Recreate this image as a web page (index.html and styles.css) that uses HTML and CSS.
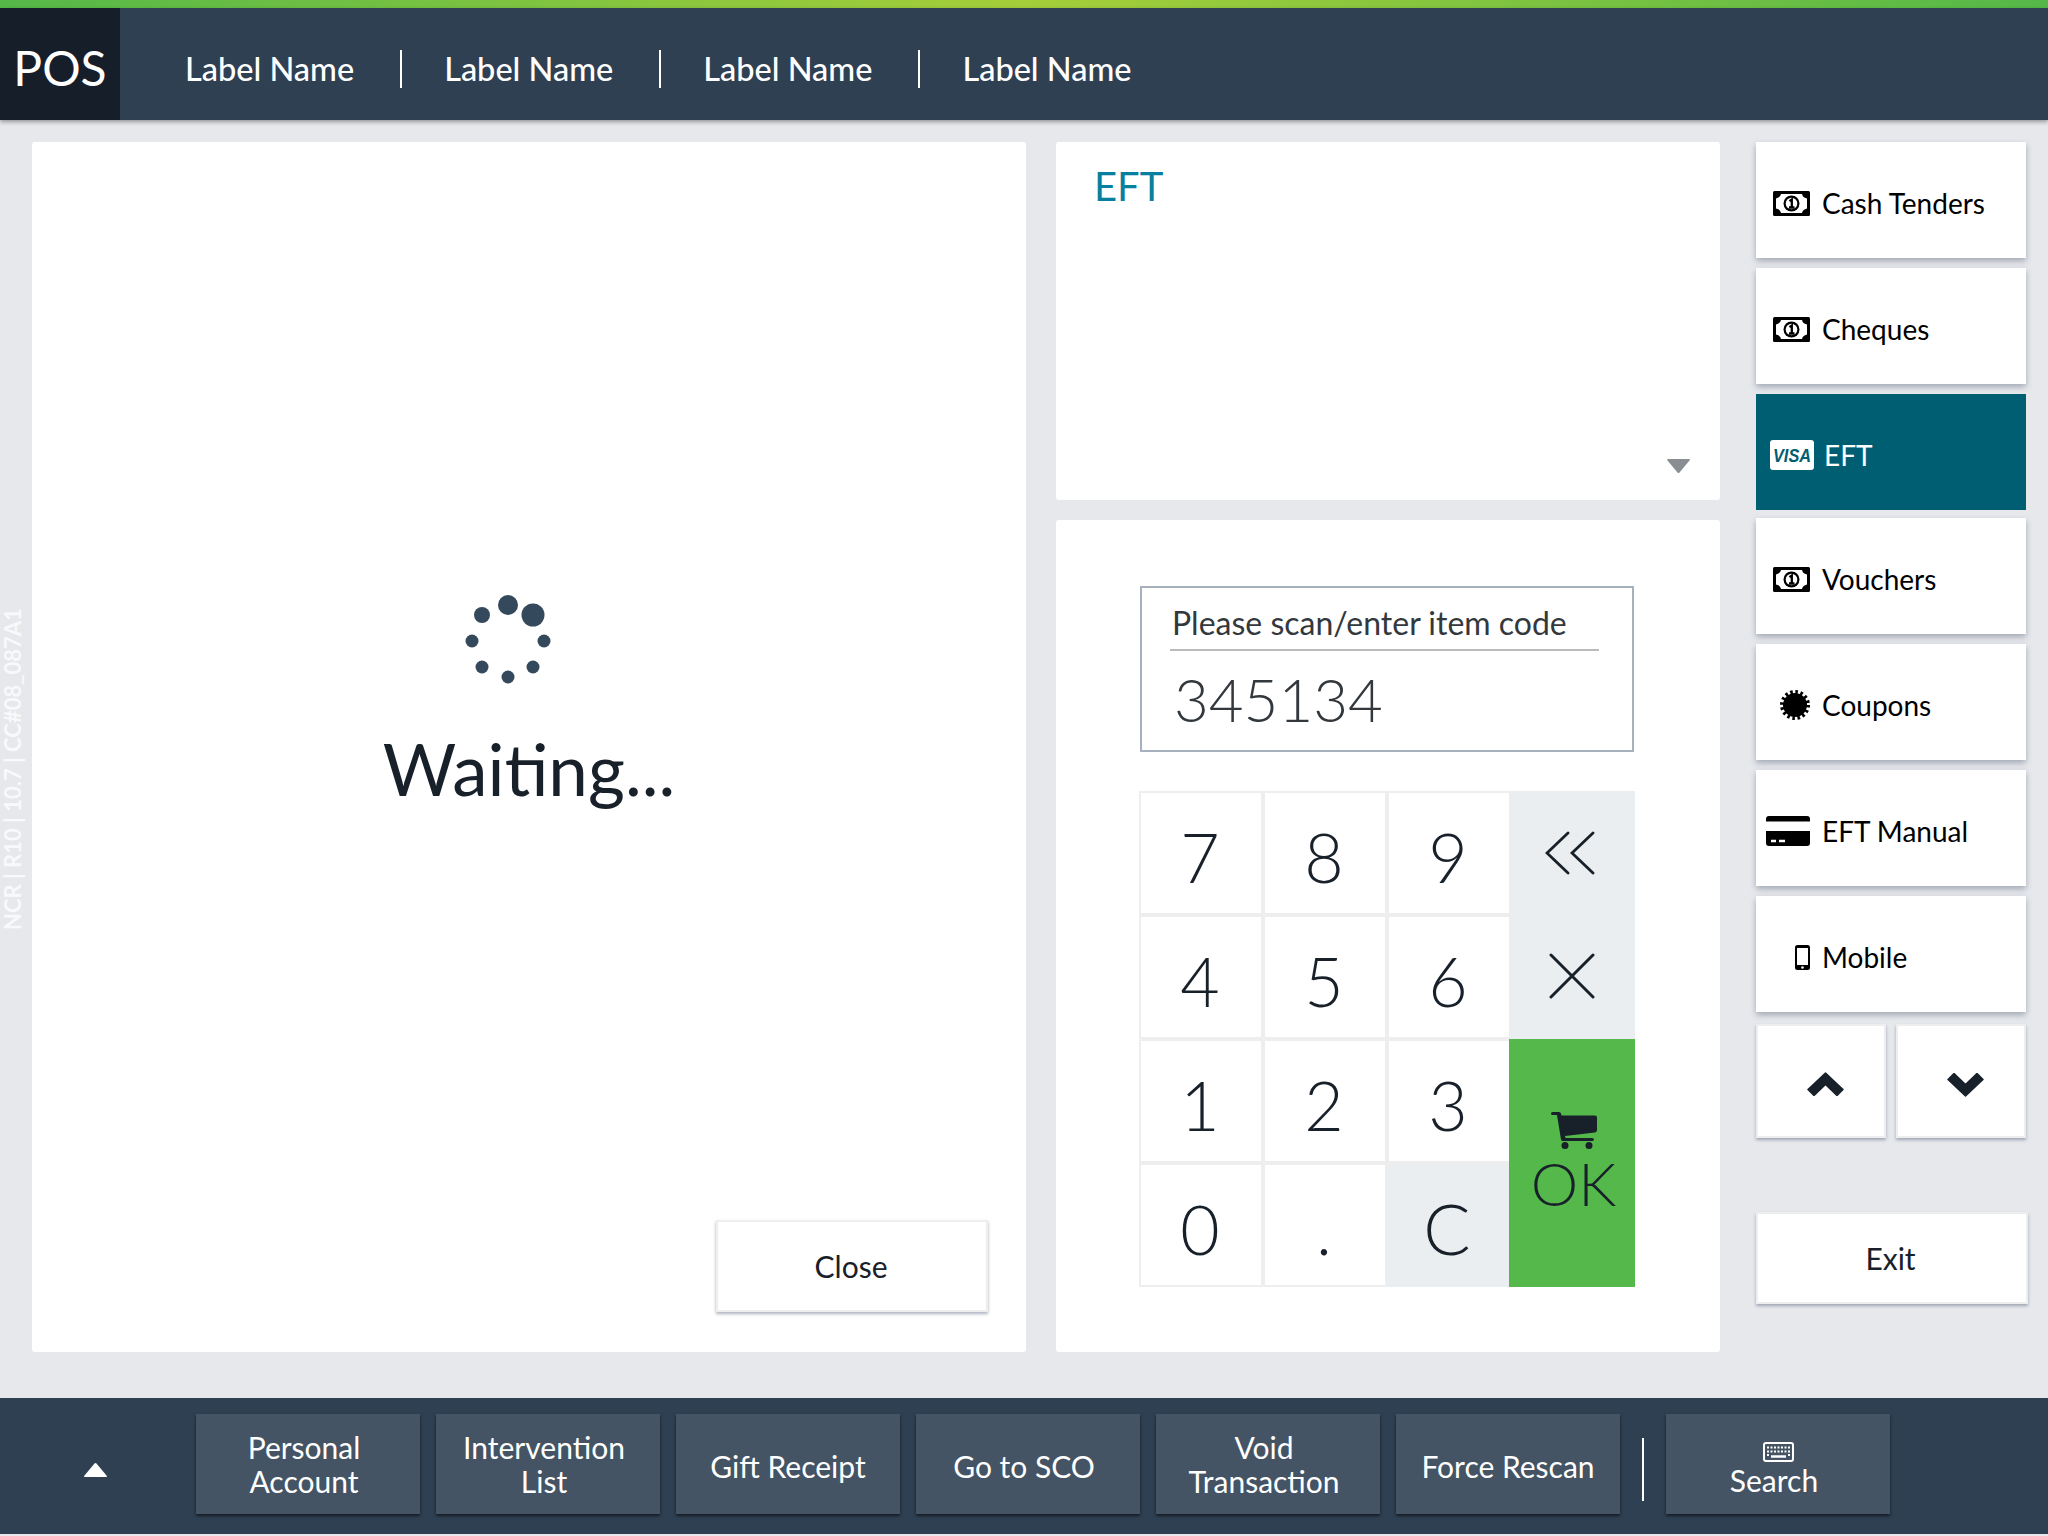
FILE: index.html
```html
<!DOCTYPE html>
<html lang="en">
<head>
  <meta charset="UTF-8">
  <meta name="viewport" content="width=device-width, initial-scale=1.0">
  <title>POS</title>
  <link rel="stylesheet" href="styles.css">
</head>
<body>
  <svg class="defs" width="0" height="0">
    <symbol id="money" viewBox="0 0 37 25">
      <rect width="37" height="25" rx="1.500" fill="#000"/>
      <path d="M8 3H29Q29.500 6.500 34 7.500V17.500Q29.500 18.500 29 22H8Q7.500 18.500 3 17.500V7.500Q7.500 6.500 8 3Z" fill="#fff"/>
      <circle cx="18.500" cy="12.500" r="8" fill="#000"/>
      <circle cx="18.500" cy="12.500" r="5.800" fill="#fff"/>
      <path d="M16.500 10.200L18.800 8.500V16.500M16 16.500H21.500" fill="none" stroke="#000" stroke-width="2.300"/>
    </symbol>
  </svg>

  <div class="top-strip"></div>

  <header class="app-header">
    <div class="brand">POS</div>
    <nav class="nav">
      <a class="nav-item">Label Name</a>
      <a class="nav-item">Label Name</a>
      <a class="nav-item">Label Name</a>
      <a class="nav-item">Label Name</a>
    </nav>
  </header>

  <div class="build-tag">NCR | R10 | 10.7 | CC#08_087A1</div>

  <main class="content">
    <section class="panel wait-panel">
      <svg class="spinner" width="90" height="90" viewBox="0 0 90 90">
        <circle cx="45" cy="10" r="10" />
        <circle cx="70" cy="20" r="11.500" />
        <circle cx="19" cy="20" r="8" />
        <circle cx="9" cy="46" r="6.500" />
        <circle cx="81" cy="46" r="6.500" />
        <circle cx="19" cy="72" r="6.500" />
        <circle cx="70" cy="72" r="6.500" />
        <circle cx="45" cy="82" r="6.500" />
      </svg>
      <h2 class="wait-text">Waiting...</h2>
      <button class="plain-btn close-btn">Close</button>
    </section>

    <div class="mid-col">
      <section class="panel info-panel">
        <h3 class="info-title">EFT</h3>
        <svg class="info-arrow" width="23" height="14" viewBox="0 0 23 14">
          <path d="M1 0H22Q23.500 0 22.500 1.500L12.500 13.500Q11.500 14.500 10.500 13.500L.5 1.500Q-.5 0 1 0Z" fill="#8a8e92"/>
        </svg>
      </section>

      <section class="panel entry-panel">
        <div class="code-box">
          <div class="code-label">Please scan/enter item code</div>
          <div class="code-value">345134</div>
        </div>
        <div class="keypad">
          <button class="key">7</button>
          <button class="key">8</button>
          <button class="key key-last">9</button>
          <button class="key key-action">
            <svg class="back-icon" width="50" height="44" viewBox="0 0 50 44" fill="none" stroke="#18202a" stroke-width="2.800" stroke-linecap="round">
              <path d="M23 2L2 22L23 42M48 2L27 22L48 42"/>
            </svg>
          </button>
          <button class="key">4</button>
          <button class="key">5</button>
          <button class="key key-last">6</button>
          <button class="key key-action">
            <svg class="cross-icon" width="46" height="46" viewBox="0 0 46 46" fill="none" stroke="#18202a" stroke-width="3" stroke-linecap="round">
              <path d="M2 2L44 44M44 2L2 44"/>
            </svg>
          </button>
          <button class="key">1</button>
          <button class="key">2</button>
          <button class="key key-last">3</button>
          <button class="key key-ok">
            <svg class="cart" width="46" height="37" viewBox="0 0 46 37" fill="#18202a">
              <path d="M0 1.500Q0 0 1.500 0H8Q9.500 0 10 1.500L10.500 3.500H44Q46 3.500 46 5.500V18Q46 20 44 20.500L14 24L14.500 26H41Q43 26 43 27.500Q43 29 41 29H12Q10.500 29 10 27.500L6 3H1.500Q0 3 0 1.500Z"/>
              <circle cx="14" cy="33.500" r="3.500"/>
              <circle cx="38" cy="33.500" r="3.500"/>
            </svg>
            <span>OK</span>
          </button>
          <button class="key">0</button>
          <button class="key">.</button>
          <button class="key key-last key-clear">C</button>
        </div>
      </section>
    </div>

    <aside class="side-col">
      <button class="tender"><span class="tender-icon"><svg width="37" height="25"><use href="#money"/></svg></span>Cash Tenders</button>
      <button class="tender"><span class="tender-icon"><svg width="37" height="25"><use href="#money"/></svg></span>Cheques</button>
      <button class="tender tender-active">
        <span class="tender-icon">
          <svg width="44" height="30" viewBox="0 0 44 30">
            <rect width="44" height="30" rx="3" fill="#fff"/>
            <text x="3" y="21.500" textLength="38" lengthAdjust="spacingAndGlyphs" class="visa-text">VISA</text>
          </svg>
        </span>EFT
      </button>
      <button class="tender tender-tight"><span class="tender-icon"><svg width="37" height="25"><use href="#money"/></svg></span>Vouchers</button>
      <button class="tender">
        <span class="tender-icon">
          <svg width="30" height="30" viewBox="0 0 30 30">
            <circle cx="15" cy="15" r="12" fill="#000"/>
            <circle cx="15" cy="15" r="13" fill="none" stroke="#000" stroke-width="4" stroke-dasharray="2.550 2.550"/>
          </svg>
        </span>Coupons
      </button>
      <button class="tender">
        <span class="tender-icon">
          <svg width="44" height="30" viewBox="0 0 44 30">
            <path d="M3 0H41Q44 0 44 3V5.500H0V3Q0 0 3 0ZM0 15H44V27Q44 30 41 30H3Q0 30 0 27Z" fill="#000"/>
            <path d="M5 25H10M13 25H19" stroke="#fff" stroke-width="2.500"/>
          </svg>
        </span>EFT Manual
      </button>
      <button class="tender">
        <span class="tender-icon">
          <svg width="15" height="25" viewBox="0 0 15 25">
            <rect width="15" height="25" rx="2.500" fill="#000"/>
            <rect x="2" y="3" width="11" height="17" fill="#fff"/>
            <circle cx="7.500" cy="22.500" r="1.300" fill="#fff"/>
          </svg>
        </span>Mobile
      </button>
      <div class="pager">
        <button class="plain-btn pager-btn pager-up">
          <svg width="37" height="24" viewBox="0 0 37 24"><path d="M18.500 1L36 17.500L30 23.500L18.500 12.500L7 23.500L1 17.500Z" fill="#18202a" stroke="#18202a" stroke-width="1.500" stroke-linejoin="round"/></svg>
        </button>
        <button class="plain-btn pager-btn pager-down">
          <svg width="37" height="24" viewBox="0 0 37 24"><path d="M18.500 23L36 6.500L30 .5L18.500 11.500L7 .5L1 6.500Z" fill="#18202a" stroke="#18202a" stroke-width="1.500" stroke-linejoin="round"/></svg>
        </button>
      </div>
      <button class="plain-btn exit-btn">Exit</button>
    </aside>
  </main>

  <footer class="app-footer">
    <div class="footer-toggle">
      <svg width="23" height="14" viewBox="0 0 23 14"><path d="M1 14H22Q23.500 14 22.500 12.500L12.500 .5Q11.500 -.5 10.500 .5L.5 12.500Q-.5 14 1 14Z" fill="#fff"/></svg>
    </div>
    <button class="foot-btn foot-left">Personal<br>Account</button>
    <button class="foot-btn foot-left">Intervention<br>List</button>
    <button class="foot-btn foot-single">Gift Receipt</button>
    <button class="foot-btn foot-single foot-left">Go to SCO</button>
    <button class="foot-btn foot-left">Void<br>Transaction</button>
    <button class="foot-btn foot-single">Force Rescan</button>
    <div class="foot-sep"></div>
    <button class="foot-btn foot-left foot-search">
      <svg class="kbd" width="31" height="20" viewBox="0 0 31 20">
        <rect x="1" y="1" width="29" height="18" rx="2" fill="none" stroke="#fff" stroke-width="2"/>
        <path d="M4 5.500H27M4 9.500H27M4 13H6M25 13H27" stroke="#fff" stroke-width="2" stroke-dasharray="2 1.500"/>
        <path d="M8 14.500H23" stroke="#fff" stroke-width="2.500"/>
      </svg>
      Search
    </button>
  </footer>
</body>
</html>
```
FILE: styles.css
```css
* {
  margin: 0;
  padding: 0;
  box-sizing: border-box;
}

body {
  font-family: Lato, "Open Sans", sans-serif;
  width: 2048px;
  height: 1536px;
  display: flex;
  flex-direction: column;
  background-color: #e6e8ec;
  color: #18202a;
  overflow: hidden;
  position: relative;
}

button {
  font-family: inherit;
  border: none;
  background: none;
  color: inherit;
}

.defs {
  position: absolute;
}

.top-strip {
  height: 8px;
  background: linear-gradient(90deg, #54b848 0%, #a5ce39 50%, #54b848 100%);
}

/* header */
.app-header {
  height: 112px;
  display: flex;
  background-color: #2f4053;
  box-shadow: 0 2px 4px rgba(0, 0, 0, 0.35);
  position: relative;
  z-index: 1;
}

.brand {
  width: 120px;
  background-color: #161f29;
  color: white;
  font-size: 48px;
  font-weight: 400;
  text-align: center;
  line-height: 120px;
}

.nav {
  display: flex;
  align-items: center;
  padding: 10px 0 0 65px;
}

.nav-item {
  color: white;
  font-size: 32.500px;
  font-weight: 500;
  line-height: 38px;
  padding-right: 46px;
  margin-right: 42px;
  border-right: 2px solid white;
}

.nav-item:last-child {
  border-right: none;
}

.build-tag {
  position: absolute;
  left: 0;
  top: 612px;
  height: 318px;
  writing-mode: vertical-rl;
  transform: rotate(180deg);
  font-size: 22px;
  font-weight: 700;
  line-height: 25px;
  color: #f8f9fa;
  white-space: nowrap;
}

/* main area */
.content {
  height: 1278px;
  display: flex;
  padding: 22px 0 46px 32px;
}

.panel {
  background-color: white;
  border-radius: 3px;
}

.wait-panel {
  width: 994px;
  display: flex;
  flex-direction: column;
  padding-top: 453px;
}

.spinner {
  fill: #35495c;
  margin-left: 431px;
}

.wait-text {
  font-size: 71px;
  font-weight: 400;
  line-height: 84px;
  margin-top: 42px;
  text-align: center;
}

.plain-btn {
  background-color: white;
  border: 2px solid #eee;
  box-shadow: 0 2px 3px rgba(70, 85, 110, 0.45);
  font-size: 30px;
  color: #18202a;
}

.close-btn {
  width: 272px;
  height: 92px;
  margin: auto 38px 40px auto;
  padding-right: 2px;
}

.mid-col {
  width: 664px;
  margin-left: 30px;
  display: flex;
  flex-direction: column;
  gap: 20px;
}

.info-panel {
  height: 358px;
  padding: 20px 38px;
  position: relative;
}

.info-title {
  font-size: 40px;
  font-weight: 400;
  color: #07809f;
}

.info-arrow {
  position: absolute;
  right: 30px;
  bottom: 27px;
}

.entry-panel {
  flex: 1;
  padding: 66px 0 0 83px;
}

.code-box {
  width: 494px;
  height: 166px;
  margin-left: 1px;
  border: 2px solid #a7b1bd;
}

.code-label {
  width: 429px;
  height: 63px;
  margin-left: 28px;
  padding: 15px 0 0 2px;
  border-bottom: 2px solid #bbb;
  font-size: 32px;
  line-height: 40px;
  color: #33383d;
}

.code-value {
  margin: 7px 0 0 32px;
  font-size: 60px;
  font-weight: 300;
  line-height: 82px;
  color: #33383d;
}

/* keypad */
.keypad {
  width: 496px;
  margin-top: 39px;
  display: grid;
  grid-template-columns: 124px 124px 122px 126px;
  grid-auto-rows: 124px;
}

.key {
  display: flex;
  align-items: center;
  justify-content: center;
  background-color: white;
  border: 2px solid #eee;
  font-size: 68px;
  font-weight: 300;
  padding: 6px 2px 0 0;
}

.key-last {
  border-right: none;
}

.key-action {
  background-color: #ebeef0;
  border: none;
  padding: 0;
}

.back-icon {
  margin-right: 4px;
}

.cross-icon {
  margin-bottom: 2px;
}

.key-clear {
  background-color: #ebeef0;
  border-color: #ebeef0;
  font-size: 70px;
  padding-right: 4px;
}

.key-ok {
  grid-row: 3 / span 2;
  grid-column: 4;
  flex-direction: column;
  background-color: #55b84a;
  border: none;
  padding: 0 0 0 3px;
  font-size: 60px;
  line-height: 62px;
}

.cart {
  margin: 0 0 3px 0;
}

/* right column */
.side-col {
  width: 272px;
  margin-left: 36px;
  display: flex;
  flex-direction: column;
  gap: 10px;
}

.tender {
  width: 270px;
  height: 116px;
  flex: none;
  display: flex;
  align-items: center;
  padding-top: 6px;
  background-color: white;
  box-shadow: 0 3px 6px rgba(60, 75, 95, 0.4);
  font-size: 28px;
  color: black;
  white-space: nowrap;
}

.tender-icon {
  width: 54px;
  margin-right: 12px;
  display: flex;
  justify-content: flex-end;
}

.tender-active {
  background-color: #005e73;
  box-shadow: none;
  color: white;
}

.tender-active .tender-icon {
  width: 58px;
  margin-right: 10px;
}

.tender-tight {
  margin-top: -2px;
}

.visa-text {
  font-family: "Liberation Sans", sans-serif;
  font-size: 18px;
  font-weight: 700;
  font-style: italic;
  fill: #005e73;
}

.pager {
  width: 270px;
  display: flex;
  gap: 10px;
  margin-top: 2px;
}

.pager-btn {
  width: 130px;
  height: 114px;
  display: flex;
  align-items: center;
  justify-content: center;
}

.pager-up svg {
  margin: 6px 0 0 9px;
}

.pager-down svg {
  margin: 8px 0 0 9px;
}

.exit-btn {
  width: 272px;
  height: 92px;
  margin-top: 64px;
  padding-right: 3px;
}

/* footer */
.app-footer {
  height: 136px;
  display: flex;
  align-items: center;
  gap: 16px;
  background-color: #2f4053;
}

.footer-toggle {
  width: 180px;
  display: flex;
  justify-content: center;
  padding: 7px 0 0 10px;
}

.foot-btn {
  width: 224px;
  height: 100px;
  margin-top: -4px;
  background-color: #445464;
  box-shadow: 0 2px 3px rgba(0, 0, 0, 0.6);
  color: white;
  font-size: 30px;
  line-height: 34px;
  text-align: center;
}

.foot-left {
  padding-right: 8px;
}

.foot-single {
  padding-top: 3px;
}

.foot-search {
  padding-top: 10px;
}

.foot-sep {
  width: 2px;
  height: 63px;
  margin: 6px 6px 0 6px;
  background-color: white;
}

.kbd {
  display: block;
  margin: 0 auto 1px;
  position: relative;
  left: 4px;
}
```
